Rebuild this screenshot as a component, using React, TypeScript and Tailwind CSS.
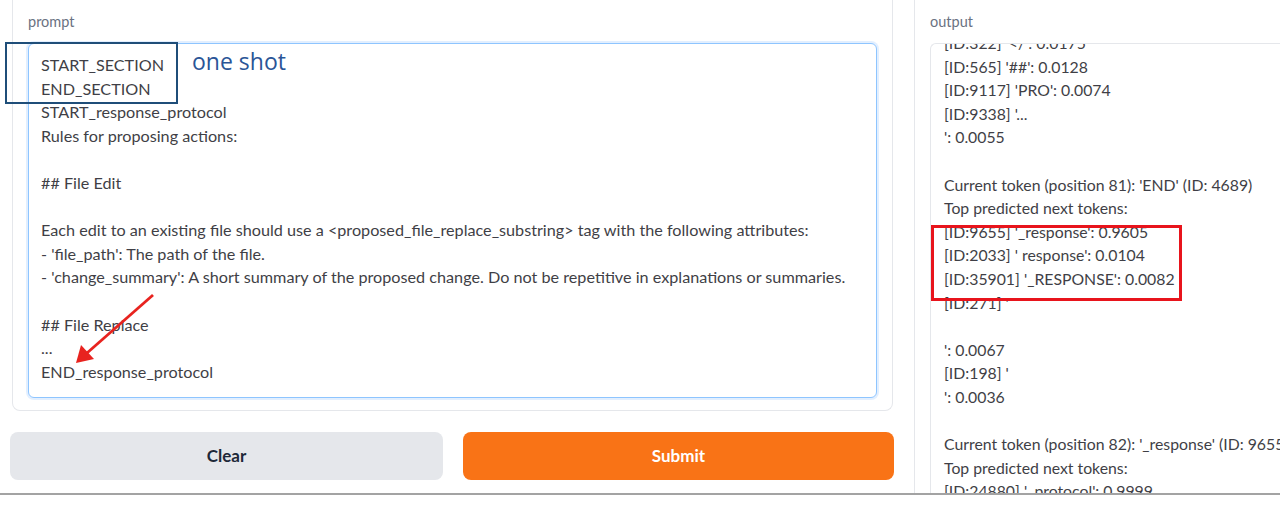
import React from "react";

const promptLines = [
  "START_SECTION",
  "END_SECTION",
  "START_response_protocol",
  "Rules for proposing actions:",
  "",
  "## File Edit",
  "",
  "Each edit to an existing file should use a <proposed_file_replace_substring> tag with the following attributes:",
  "- 'file_path': The path of the file.",
  "- 'change_summary': A short summary of the proposed change. Do not be repetitive in explanations or summaries.",
  "",
  "## File Replace",
  "...",
  "END_response_protocol",
];

const outputLines = [
  "[ID:322] '</': 0.0175",
  "[ID:565] '##': 0.0128",
  "[ID:9117] 'PRO': 0.0074",
  "[ID:9338] '...",
  "': 0.0055",
  "",
  "Current token (position 81): 'END' (ID: 4689)",
  "Top predicted next tokens:",
  "[ID:9655] '_response': 0.9605",
  "[ID:2033] ' response': 0.0104",
  "[ID:35901] '_RESPONSE': 0.0082",
  "[ID:271] '",
  "",
  "': 0.0067",
  "[ID:198] '",
  "': 0.0036",
  "",
  "Current token (position 82): '_response' (ID: 9655)",
  "Top predicted next tokens:",
  "[ID:24880] '_protocol': 0.9999",
];

function Lines({ lines }: { lines: string[] }) {
  return (
    <>
      {lines.map((l, i) => (
        <div key={i} className="h-[23.6px] leading-[23.6px] whitespace-nowrap">
          {l || "\u00a0"}
        </div>
      ))}
    </>
  );
}

export default function App() {
  return (
    <div className="relative w-[1280px] h-[525px] bg-white overflow-hidden font-['Lato','Noto_Sans',sans-serif]">
      <div className="flex h-[493px] overflow-hidden">
        {/* left column */}
        <div className="w-[904px] shrink-0 pl-[10px] pr-[10px]">
          <div className="ml-[2px] w-[881px] border border-t-0 border-gray-200 rounded-b-lg px-[15px] pb-[12px]">
            <div className="h-[43px] pt-[13px] text-[14.5px] leading-[18px] text-gray-500">prompt</div>
            <div className="h-[355px] rounded-md border border-blue-300 shadow-[0_0_0_2px_rgba(191,219,254,0.45)] bg-white pl-[12px] pt-[9px] text-[16.2px] text-[#3f3f46] overflow-hidden">
              <Lines lines={promptLines} />
            </div>
          </div>
          <div className="mt-[21px] flex gap-[20px]">
            <button className="w-[433px] h-[48px] rounded-lg bg-[#e5e7eb] text-[17px] font-bold text-gray-800">
              Clear
            </button>
            <button className="w-[431px] h-[48px] rounded-lg bg-[#f97316] text-[17px] font-bold text-white">
              Submit
            </button>
          </div>
        </div>

        {/* right column */}
        <div className="flex-1 pl-[10px]">
          <div className="h-full border-l border-gray-200 pl-[15px]">
            <div className="h-[43px] pt-[13px] text-[14.5px] leading-[18px] text-gray-500">output</div>
            <div className="h-[460px] border-l border-t border-gray-200 rounded-tl-md overflow-hidden pl-[13px] text-[15.8px] text-[#3f3f46]">
              <div className="-mt-[13px]">
                <Lines lines={outputLines} />
              </div>
            </div>
          </div>
        </div>
      </div>
      <div className="h-[2px] bg-[#a3a3a3]" />

      {/* annotations */}
      <div className="absolute left-[5px] top-[42px] w-[173px] h-[62px] border-[2.5px] border-[#1f4e79]" />
      <div className="absolute left-[192px] top-[46px] text-[23px] leading-[30px] text-[#2a5597] font-['Open_Sans',sans-serif]">
        one shot
      </div>
      <div className="absolute left-[931px] top-[225px] w-[251px] h-[76px] border-[3px] border-[#e8141c]" />
      <svg className="absolute left-0 top-0 pointer-events-none" width="1280" height="525">
        <line x1="153" y1="295" x2="87" y2="353" stroke="#e8231f" strokeWidth="2.8" />
        <polygon points="76,363 81,345 94,359" fill="#e8231f" />
      </svg>
    </div>
  );
}
